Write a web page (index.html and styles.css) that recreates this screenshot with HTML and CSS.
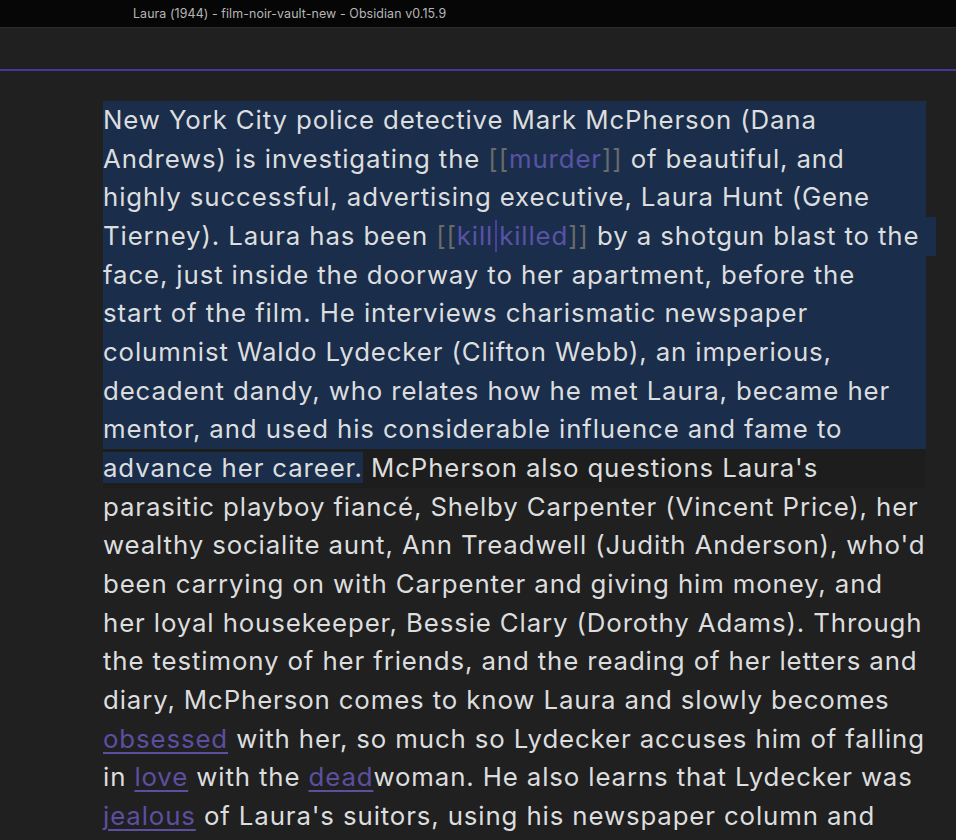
FILE: index.html
```html
<!DOCTYPE html>
<html>
<head>
<meta charset="utf-8">
<link rel="stylesheet" href="styles.css">
</head>
<body>
<div class="titlebar"><span class="title">Laura (1944) - film-noir-vault-new - Obsidian v0.15.9</span></div>
<div class="header"></div>
<div class="editor">
  <div class="content">
    <div class="line sel">New York City police detective Mark McPherson (Dana</div>
    <div class="line sel">Andrews) is investigating the <span class="br">[[</span><span class="il">murder</span><span class="br">]]</span> of beautiful, and</div>
    <div class="line sel">highly successful, advertising executive, Laura Hunt (Gene</div>
    <div class="line sel wide">Tierney). Laura has been <span class="br">[[</span><span class="il">kill</span><span class="pipe"></span><span class="il">killed</span><span class="br">]]</span> by a shotgun blast to the</div>
    <div class="line sel">face, just inside the doorway to her apartment, before the</div>
    <div class="line sel">start of the film. He interviews charismatic newspaper</div>
    <div class="line sel">columnist Waldo Lydecker (Clifton Webb), an imperious,</div>
    <div class="line sel">decadent dandy, who relates how he met Laura, became her</div>
    <div class="line sel">mentor, and used his considerable influence and fame to</div>
    <div class="line active"><span class="selpart">advance her career.</span> McPherson also questions Laura's</div>
    <div class="line">parasitic playboy fiancé, Shelby Carpenter (Vincent Price), her</div>
    <div class="line">wealthy socialite aunt, Ann Treadwell (Judith Anderson), who'd</div>
    <div class="line">been carrying on with Carpenter and giving him money, and</div>
    <div class="line">her loyal housekeeper, Bessie Clary (Dorothy Adams). Through</div>
    <div class="line">the testimony of her friends, and the reading of her letters and</div>
    <div class="line">diary, McPherson comes to know Laura and slowly becomes</div>
    <div class="line"><span class="ul">obsessed</span> with her, so much so Lydecker accuses him of falling</div>
    <div class="line">in <span class="ul">love</span> with the <span class="ul">dead</span>woman. He also learns that Lydecker was</div>
    <div class="line"><span class="ul">jealous</span> of Laura's suitors, using his newspaper column and</div>
  </div>
</div>
</body>
</html>
```
FILE: styles.css
```css
html, body {
  margin: 0;
  padding: 0;
  background: #202020;
  overflow: hidden;
  height: 840px;
}
.titlebar {
  height: 27px;
  background: #060606;
  border-bottom: 1px solid #2b2b2b;
  display: flex;
  align-items: center;
  padding-left: 133px;
  font-family: Inter, "Noto Sans", sans-serif;
  font-size: 12.4px;
  letter-spacing: 0.1px;
  color: #b6b6b6;
}
.header {
  height: 41px;
  background: #202020;
  border-bottom: 2px solid #483699;
}
.editor {
  padding: 30px 0 0 103px;
}
.content {
  width: 823px;
  font-family: Inter, "Noto Sans", sans-serif;
  font-size: 25.8px;
  letter-spacing: 0.88px;
  line-height: 38.67px;
  color: #dcddde;
}
.line {
  white-space: nowrap;
  height: 38.67px;
}
.sel {
  background: #1a2e4b;
}
.wide {
  margin-right: -10px;
}
.active {
  background: #1d1d1d;
}
.selpart {
  background: #1a2e4b;
}
.br {
  color: #6a6a6a;
}
.il {
  color: #5a52a6;
}
.pipe {
  display: inline-block;
  width: 2px;
  height: 32px;
  background: #4a3f9a;
  vertical-align: -7px;
  margin: 0 2px;
}
.ul {
  color: #5c4fa0;
  text-decoration: underline;
  text-underline-offset: 4px;
  text-decoration-thickness: 1.5px;
}
```
